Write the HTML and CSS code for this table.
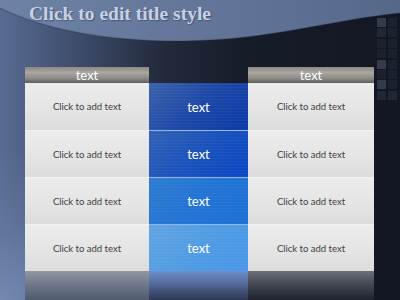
FILE: index.html
```html
<!DOCTYPE html>
<html>
<head>
<meta charset="utf-8">
<link rel="stylesheet" href="styles.css">
</head>
<body>
<div class="slide">
  <svg class="backdrop" width="400" height="300" viewBox="0 0 400 300" aria-hidden="true">
    <defs>
      <linearGradient id="band" x1="0" y1="0" x2="1" y2="0">
        <stop offset="0" stop-color="#6e82a4"/>
        <stop offset="0.5" stop-color="#63769a"/>
        <stop offset="1" stop-color="#56688a"/>
      </linearGradient>
    </defs>
    <path d="M0,0 H400 V13 C330,20 270,40 185,41 C110,42 45,30 0,8 Z" fill="url(#band)"/>
    <path d="M0,8 C45,30 110,42 185,41 C270,40 330,20 400,13" fill="none" stroke="rgba(30,38,56,0.3)" stroke-width="1.2"/>
  </svg>

  <div class="squares" aria-hidden="true">
    <span class="lit"></span><span></span>
    <span class="dim"></span><span></span>
    <span></span><span></span>
    <span></span><span></span>
    <span class="lit"></span><span></span>
    <span></span><span></span>
    <span class="lit"></span><span></span>
    <span class="dim"></span><span class="dim"></span>
  </div>

  <h1 class="title">Click to edit title style</h1>

  <div class="board">
    <div class="col side">
      <div class="head">text</div>
      <div class="cell">Click to add text</div>
      <div class="cell">Click to add text</div>
      <div class="cell">Click to add text</div>
      <div class="cell">Click to add text</div>
      <div class="reflect"></div>
    </div>
    <div class="col mid">
      <div class="gap"></div>
      <div class="tile t1">text</div>
      <div class="tile t2">text</div>
      <div class="tile t3">text</div>
      <div class="tile t4">text</div>
      <div class="reflect"></div>
    </div>
    <div class="col side right">
      <div class="head">text</div>
      <div class="cell">Click to add text</div>
      <div class="cell">Click to add text</div>
      <div class="cell">Click to add text</div>
      <div class="cell">Click to add text</div>
      <div class="reflect"></div>
    </div>
  </div>
</div>
</body>
</html>
```

FILE: styles.css
```css
html, body {
  margin: 0;
  padding: 0;
  background: #151a26;
}

.slide {
  position: relative;
  width: 400px;
  height: 300px;
  overflow: hidden;
  display: flex;
  flex-direction: column;
  background:
    radial-gradient(ellipse 170px 150px at 0% 100%, #7389b2 0%, rgba(104,126,166,0.6) 45%, rgba(90,108,146,0) 100%),
    linear-gradient(90deg, #586c92 0%, #4e6084 7%, #3a4866 22%, #232b3c 40%, #171c29 60%, #131723 100%);
  font-family: "Lato", "Noto Sans", sans-serif;
}

.backdrop {
  position: absolute;
  left: 0;
  top: 0;
}

.squares {
  position: absolute;
  left: 377px;
  top: 18px;
  display: grid;
  grid-template-columns: 9px 9px;
  grid-auto-rows: 9px;
  column-gap: 2px;
  row-gap: 1.4px;
}

.squares span {
  background: #1c2130;
}

.squares span.lit {
  background: #353b4a;
}

.squares span.dim {
  background: #222735;
}

.title {
  position: relative;
  margin: 0;
  height: 67px;
  box-sizing: border-box;
  padding: 2px 0 0 29px;
  font-family: "Liberation Serif", "Times New Roman", serif;
  font-weight: bold;
  font-size: 19.5px;
  line-height: 24px;
  color: #c6d1e6;
  text-shadow: 1px 1px 1px rgba(30, 40, 60, 0.45);
}

.board {
  position: relative;
  flex: 1;
  display: grid;
  grid-template-columns: 124px 99px 126px;
  margin-left: 25px;
}

.col {
  display: flex;
  flex-direction: column;
}

.head {
  height: 16px;
  line-height: 16px;
  text-align: center;
  color: #ffffff;
  font-size: 13px;
  background: linear-gradient(180deg, #8c8884 0%, #aaa6a2 35%, #8e8b88 70%, #5f5d5b 100%);
}

.cell {
  height: 47px;
  display: flex;
  align-items: center;
  justify-content: center;
  font-size: 9.5px;
  color: #404040;
  background: linear-gradient(180deg, #ececec 0%, #e4e4e4 60%, #dcdcdc 100%);
}

.cell + .cell {
  border-top: 1px solid #f2f2f2;
  height: 46px;
}

.side .reflect {
  flex: 1;
  background: linear-gradient(180deg, #9096a2 0%, #737c8e 40%, #505a6e 100%);
}

.right .reflect {
  background: linear-gradient(180deg, #6e7078 0%, #444852 45%, #1e2230 100%);
}

.gap {
  height: 16px;
}

.tile {
  height: 47px;
  display: flex;
  align-items: center;
  justify-content: center;
  color: #ffffff;
  font-size: 13px;
}

.tile + .tile {
  border-top: 1px solid #8fb4e6;
  height: 46px;
}

.t1 { background-image:
    repeating-linear-gradient(0deg, rgba(255,255,255,0.04) 0 1px, transparent 1px 3px),
    linear-gradient(135deg, #3a62aa 0%, #1d48a8 50%, #0a3aa6 100%); }
.t2 { background-image:
    repeating-linear-gradient(0deg, rgba(255,255,255,0.04) 0 1px, transparent 1px 3px),
    linear-gradient(135deg, #3262b4 0%, #1a52bc 50%, #0a46c4 100%); }
.t3 { background-image:
    repeating-linear-gradient(0deg, rgba(255,255,255,0.04) 0 1px, transparent 1px 3px),
    linear-gradient(135deg, #2f7cd0 0%, #2274d4 50%, #1a6ed6 100%); }
.t4 { background-image:
    repeating-linear-gradient(0deg, rgba(255,255,255,0.04) 0 1px, transparent 1px 3px),
    linear-gradient(135deg, #62a4e0 0%, #509ce4 50%, #4896ea 100%); }

.mid .reflect {
  flex: 1;
  background: linear-gradient(180deg, #6d8fcc 0%, #53699a 45%, #2e3850 100%);
}
```
